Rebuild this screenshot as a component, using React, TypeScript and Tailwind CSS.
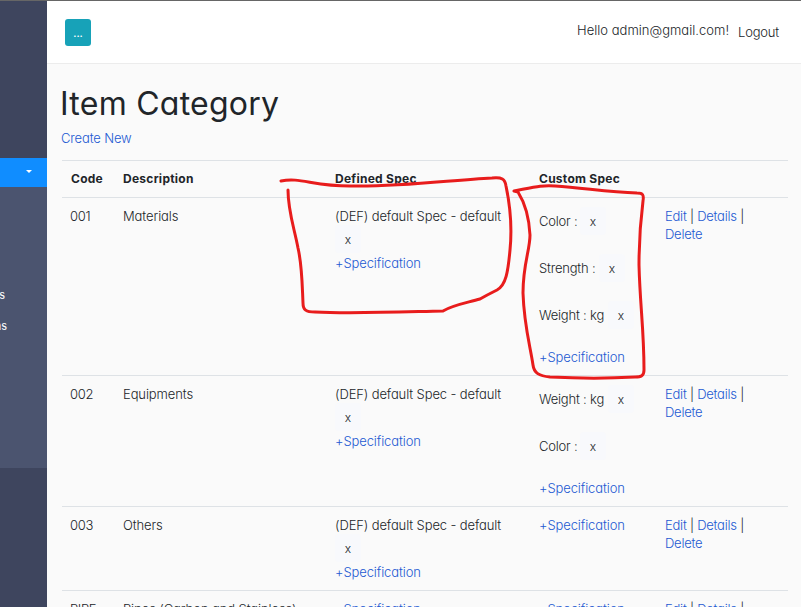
import React from "react";

const link = "text-[#2359d2]";

function Remove() {
  return (
    <button className="h-7 w-[26px] shrink-0 rounded-sm bg-[#f8f9fc] pt-px text-center text-[12px] leading-[28px] text-[#212529]">
      x
    </button>
  );
}

function AddSpec() {
  return <a className={`block w-fit tracking-[-0.1px] ${link}`}>+Specification</a>;
}

function Defined({ empty }: { empty?: boolean }) {
  return (
    <div>
      {!empty && (
        <>
          <div className="whitespace-nowrap tracking-[-0.12px]">(DEF) default Spec - default</div>
          <div className="flex h-[29px]">
            <Remove />
          </div>
        </>
      )}
      <AddSpec />
    </div>
  );
}

type Item = { label: string; width: string };

const color: Item = { label: "Color :", width: "w-[41px]" };
const strength: Item = { label: "Strength :", width: "w-[60px]" };
const weight: Item = { label: "Weight : kg", width: "w-[69px]" };

function Row({
  code,
  name,
  items,
  empty,
  height,
}: {
  code: string;
  name: string;
  items: Item[];
  empty?: boolean;
  height: string;
}) {
  return (
    <div
      className={`grid shrink-0 grid-cols-[52px_212px_204px_127px_1fr] border-t border-[#dee2e6] pt-[9px] pl-[9px] ${height}`}
    >
      <div className="-ml-px pr-px tracking-[-0.3px]">{code}</div>
      <div className="whitespace-nowrap tracking-[-0.1px]">{name}</div>
      <Defined empty={empty} />
      <div>
        {items.map((it) => (
          <div key={it.label} className="mb-[19px] flex h-7 items-center">
            <span className={`whitespace-nowrap tracking-[-0.2px] ${it.width}`}>{it.label}</span>
            <Remove />
          </div>
        ))}
        <AddSpec />
      </div>
      <div className="-ml-px whitespace-nowrap tracking-[-0.24px]">
        <a className={link}>Edit</a> | <a className={link}>Details</a> |
        <br />
        <a className={link}>Delete</a>
      </div>
    </div>
  );
}

export default function App() {
  return (
    <div className="relative flex h-[607px] w-[801px] overflow-hidden bg-[#fafafa] font-['Inter','Liberation_Sans',sans-serif] text-[13px] font-light leading-[18px] text-[#212529] [font-feature-settings:'cv11']">
      <aside className="flex w-[47px] shrink-0 flex-col overflow-hidden border-t border-[#666] bg-[#3e455e] text-[11px] text-white">
        <div className="mt-[157px] flex h-[29px] shrink-0 items-center justify-end bg-[#108dff] pr-[15px]">
          <span className="mb-[3px] h-0 w-0 border-x-[3px] border-t-[3px] border-x-transparent border-t-white" />
        </div>
        <div className="flex h-[281px] shrink-0 flex-col bg-[#4b546f] pt-[99px] font-normal">
          <div className="flex h-[31px] w-[5px] justify-end">s</div>
          <div className="flex h-[31px] w-[7px] justify-end">ns</div>
        </div>
      </aside>

      <main className="flex min-w-0 flex-1 flex-col">
        <header className="flex h-16 shrink-0 items-start justify-between border-t border-b border-t-[#666] border-b-[#ececec] bg-white pt-[18px] pr-[22px] pl-[18px]">
          <button className="h-[27px] w-[26px] rounded-[3px] bg-[#17a2b8] text-[10px] font-semibold leading-[26px] text-white">
            ...
          </button>
          <div className="mt-[2px] flex gap-[9px] whitespace-nowrap">
            <span className="tracking-[0.02px]">Hello admin@gmail.com!</span>
            <span className="pt-[2px] tracking-[-0.2px]">Logout</span>
          </div>
        </header>

        <div className="flex min-h-0 flex-1 flex-col pr-[13px] pl-[15px]">
          <h1 className="-ml-[2px] mt-[21px] h-[38px] text-[32px] font-normal leading-[38px] tracking-[0.25px]">
            Item Category
          </h1>
          <a className={`-ml-px mt-[6px] mb-[13px] w-fit tracking-[-0.15px] ${link}`}>Create New</a>
          <div className="grid h-[37px] shrink-0 grid-cols-[52px_212px_204px_1fr] border-t border-[#dee2e6] pt-[9px] pl-[9px] text-[12px] font-bold tracking-[0.26px]">
            <div>Code</div>
            <div>Description</div>
            <div>Defined Spec</div>
            <div>Custom Spec</div>
          </div>
          <Row code="001" name="Materials" items={[color, strength, weight]} height="h-[178px]" />
          <Row code="002" name="Equipments" items={[weight, color]} height="h-[131px]" />
          <Row code="003" name="Others" items={[]} height="h-[84px]" />
          <Row code="PIPE" name="Pipes (Carbon and Stainless)" items={[]} empty height="h-[84px]" />
        </div>
      </main>

      <svg
        className="pointer-events-none absolute top-0 left-0"
        width="801"
        height="607"
        fill="none"
        stroke="#e81c1c"
        strokeWidth="3"
        strokeLinecap="round"
        strokeLinejoin="round"
      >
        <path d="M281 181C300 177 313 186 350 186C405 187 450 180 492 178C502 177 505 179 506 186C510 205 512 230 510 250C508 272 506 285 497 290C489 294 487 295 480 299C466 303 453 305 443 311C400 312 350 314 315 312C306 312 303 310 303 303C302 280 302 265 298 248C294 227 288 211 288 190" />
        <path d="M514 191C535 187 542 185 555 186C585 188 607 192 637 193C643 193 644 195 643 201C640 225 639 250 639 265C640 305 644 330 644 370C644 376 641 377 635 377C600 379 570 378 550 377C539 376 534 373 533 365C530 345 524 325 523 293C523 264 530 250 530 235C529 215 523 200 518 192L514 191" />
      </svg>
    </div>
  );
}
